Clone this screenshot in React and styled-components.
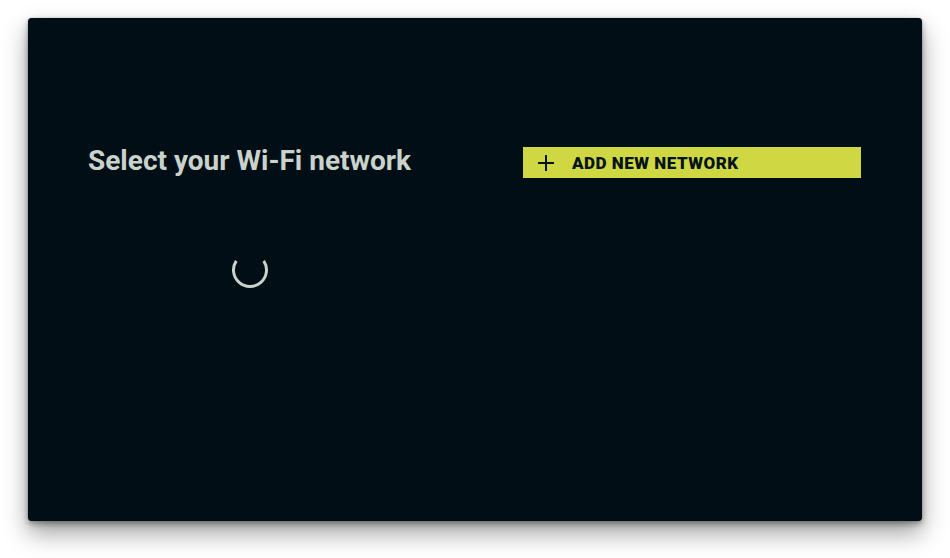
import React from 'react';
import styled, { createGlobalStyle } from 'styled-components';

const GlobalStyle = createGlobalStyle`
    html, body {
        margin: 0;
        padding: 0;
        background: #ffffff;
        font-family: Roboto, "Liberation Sans", sans-serif;
    }
`;

function PlusIcon() {
    return (
        <svg width="18" height="18" viewBox="0 0 18 18" fill="none">
            <path d="M9 1v16M1 9h16" stroke="#05131a" strokeWidth="2" />
        </svg>
    );
}

function Spinner() {
    // open arc, wide gap at the top
    return (
        <SpinnerSvg width="40" height="40" viewBox="0 0 40 40">
            <path
                d="M6.3 10.8 A16.5 16.5 0 1 0 33.7 10.8"
                fill="none"
                stroke="#c9d3cc"
                strokeWidth="3"
            />
        </SpinnerSvg>
    );
}

export default function App() {
    return (
        <>
            <GlobalStyle />
            <Page>
                <Panel>
                    <LeftColumn>
                        <Title>Select your Wi-Fi network</Title>
                        <SpinnerWrap>
                            <Spinner />
                        </SpinnerWrap>
                    </LeftColumn>
                    <AddButton>
                        <PlusIcon />
                        <ButtonLabel>ADD NEW NETWORK</ButtonLabel>
                    </AddButton>
                </Panel>
            </Page>
        </>
    );
}

const Page = styled.div`
    width: 950px;
    height: 558px;
    padding: 18px 0 0 28px;
    box-sizing: border-box;
`;

const Panel = styled.div`
    width: 894px;
    height: 503px;
    box-sizing: border-box;
    background: #020e15;
    border-radius: 4px;
    box-shadow: 0 12px 24px rgba(0, 0, 0, 0.38), 0 3px 6px rgba(0, 0, 0, 0.35),
        0 0 1px rgba(0, 0, 0, 0.6);
    padding: 126px 61px 0 60px;
    display: flex;
    justify-content: space-between;
    align-items: flex-start;
`;

const LeftColumn = styled.div`
    display: flex;
    flex-direction: column;
    align-items: center;
`;

const Title = styled.h1`
    margin: 0;
    font-size: 28px;
    font-weight: 700;
    line-height: 34px;
    color: #c9d3cc;
    letter-spacing: 0;
`;

const SpinnerWrap = styled.div`
    margin-top: 72px;
    width: 40px;
    height: 40px;
`;

const SpinnerSvg = styled.svg`
    display: block;
`;

const AddButton = styled.button`
    width: 338px;
    height: 31px;
    margin-top: 3px;
    border: none;
    border-radius: 0;
    background: #cfd843;
    display: flex;
    align-items: center;
    gap: 17px;
    padding: 0 0 0 14px;
    cursor: pointer;
`;

const ButtonLabel = styled.span`
    font-family: Roboto, "Liberation Sans", sans-serif;
    font-size: 17px;
    font-weight: 900;
    color: #05131a;
    letter-spacing: 0.5px;
`;
